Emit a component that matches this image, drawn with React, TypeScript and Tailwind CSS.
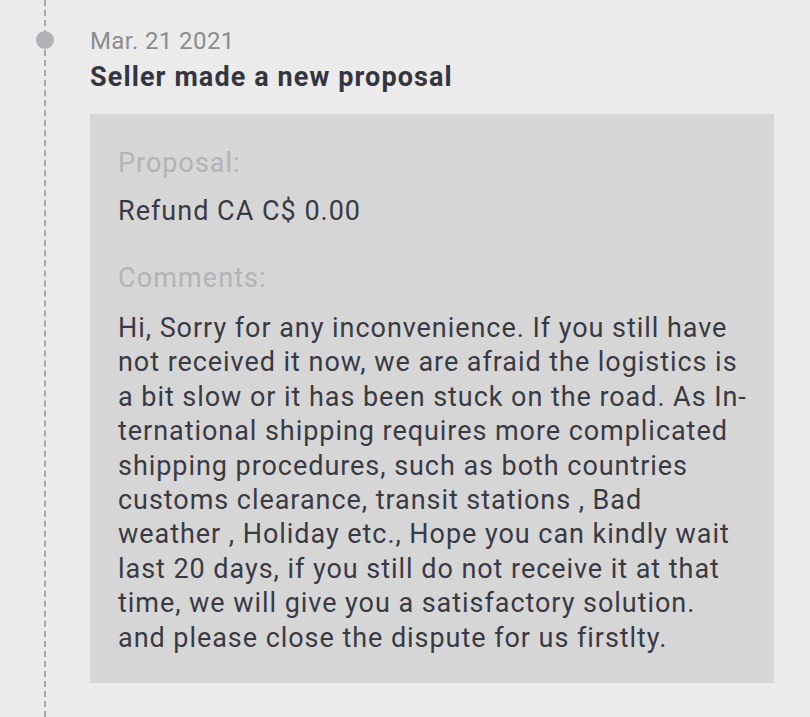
import React from "react";

const lines = [
  "Hi, Sorry for any inconvenience. If you still have",
  "not received it now, we are afraid the logistics is",
  "a bit slow or it has been stuck on the road. As In-",
  "ternational shipping requires more complicated",
  "shipping procedures, such as both countries",
  "customs clearance, transit stations , Bad",
  "weather , Holiday etc., Hope you can kindly wait",
  "last 20 days, if you still do not receive it at that",
  "time, we will give you a satisfactory solution.",
  "and please close the dispute for us firstlty.",
];

export default function App() {
  return (
    <div className="w-[810px] h-[717px] bg-[#ebebeb] overflow-hidden flex" style={{ fontFamily: "Roboto, 'Noto Sans', sans-serif" }}>
      <div className="w-[90px] shrink-0 relative">
        <div className="absolute left-[44px] top-0 bottom-0 border-l-2 border-dashed border-[#a8a8ac]" />
        <div className="absolute left-[36px] top-[31px] w-[18px] h-[18px] rounded-full bg-[#b1b1b5]" />
      </div>
      <div className="flex-1 pt-[26px] pr-[36px]">
        <div className="text-[24px] leading-[30px] tracking-[0.4px] text-[#8b8b90]">Mar. 21 2021</div>
        <div className="text-[27px] leading-[34px] tracking-[1.1px] font-bold text-[#35353f] mt-[4px]">Seller made a new proposal</div>
        <div className="mt-[20px] bg-[#d6d6d6] pl-[28px] pt-[32px] pb-[28px]">
          <div className="text-[27px] leading-[34px] tracking-[1px] text-[#b3b3b5]">Proposal:</div>
          <div className="text-[27px] leading-[34px] tracking-[1px] text-[#3a3a44] mt-[14px]">Refund CA C$ 0.00</div>
          <div className="text-[27px] leading-[34px] tracking-[1.1px] text-[#b3b3b5] mt-[33px]">Comments:</div>
          <div className="mt-[16px] text-[27px] leading-[34.4px] tracking-[0.95px] text-[#3a3a44]">
            {lines.map((l, i) => (
              <div key={i} className="whitespace-nowrap">{l}</div>
            ))}
          </div>
        </div>
      </div>
    </div>
  );
}
